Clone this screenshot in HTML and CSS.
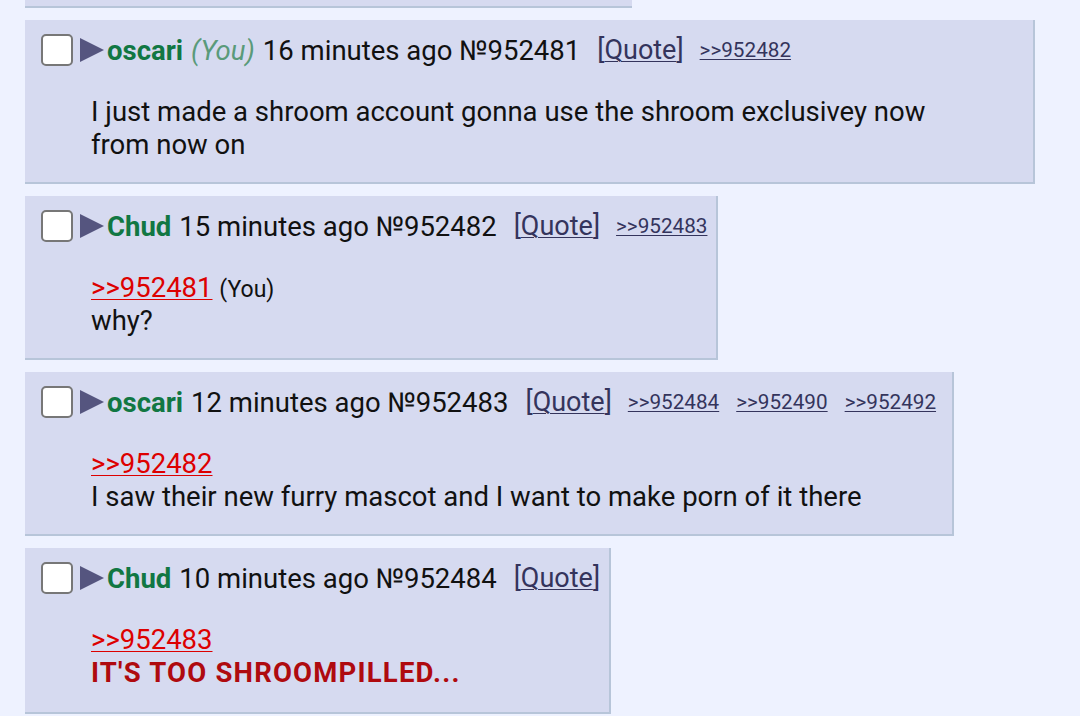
FILE: index.html
```html
<!DOCTYPE html>
<html>
<head>
<meta charset="utf-8">
<link rel="stylesheet" href="styles.css">
</head>
<body>
<div class="thread">
  <div class="post stub"></div>

  <div class="post wide">
    <div class="head">
      <span class="check"></span>
      <span class="tri"></span>
      <span class="name">oscari</span>
      <span class="you">(You)</span>
      <span class="time">16 minutes ago №952481</span>
      <span class="ql">[<u>Quote</u>]</span>
      <span class="backs"><a class="back">&gt;&gt;952482</a></span>
    </div>
    <div class="body">I just made a shroom account gonna use the shroom exclusivey now from now on</div>
  </div>

  <div class="post">
    <div class="head">
      <span class="check"></span>
      <span class="tri"></span>
      <span class="name">Chud</span>
      <span class="time">15 minutes ago №952482</span>
      <span class="ql">[<u>Quote</u>]</span>
      <span class="backs"><a class="back">&gt;&gt;952483</a></span>
    </div>
    <div class="body"><a class="rq">&gt;&gt;952481</a> <span class="me">(You)</span><br>why?</div>
  </div>

  <div class="post roomy">
    <div class="head">
      <span class="check"></span>
      <span class="tri"></span>
      <span class="name">oscari</span>
      <span class="time">12 minutes ago №952483</span>
      <span class="ql">[<u>Quote</u>]</span>
      <span class="backs"><a class="back">&gt;&gt;952484</a><a class="back">&gt;&gt;952490</a><a class="back">&gt;&gt;952492</a></span>
    </div>
    <div class="body"><a class="rq">&gt;&gt;952482</a><br>I saw their new furry mascot and I want to make porn of it there</div>
  </div>

  <div class="post last">
    <div class="head">
      <span class="check"></span>
      <span class="tri"></span>
      <span class="name">Chud</span>
      <span class="time">10 minutes ago №952484</span>
      <span class="ql">[<u>Quote</u>]</span>
    </div>
    <div class="body"><a class="rq">&gt;&gt;952483</a><br><span class="shout">IT'S TOO SHROOMPILLED...</span></div>
  </div>
</div>
</body>
</html>
```

FILE: styles.css
```css
html, body {
  margin: 0;
  padding: 0;
  background: #eef2ff;
  font-family: Roboto, "Noto Sans", sans-serif;
  color: #111;
  overflow: hidden;
}
.thread {
  display: flex;
  flex-direction: column;
  align-items: flex-start;
  gap: 12px;
  padding-left: 25px;
}
.post {
  background: #d6daf0;
  border-right: 2px solid #b7c5d9;
  border-bottom: 2px solid #b7c5d9;
  box-sizing: border-box;
  max-width: 1010px;
  padding: 12px 9px 21px 16px;
}
.post.roomy { padding-right: 16px; }
.post.last { padding-bottom: 23px; }
.post.stub {
  width: 607px;
  height: 8px;
  padding: 0;
  border-right: none;
}
.post.wide { width: 1010px; }
.head {
  display: flex;
  align-items: center;
  height: 36px;
  font-size: 27.5px;
  white-space: nowrap;
}
.check {
  width: 32px;
  height: 32px;
  box-sizing: border-box;
  border: 2px solid #777;
  border-radius: 5px;
  background: #fff;
  flex: none;
}
.tri {
  width: 0;
  height: 0;
  border-top: 12px solid transparent;
  border-bottom: 12px solid transparent;
  border-left: 24px solid #55557f;
  margin-left: 7px;
  margin-right: 3px;
}
.name {
  color: #117743;
  font-weight: bold;
  margin-right: 8px;
}
.you {
  color: #5a9a7a;
  font-style: italic;
  margin-right: 8px;
}
.time { margin-right: 17px; }
.ql { color: #34345c; margin-right: 16px; font-size: 27px; }
.ql:last-child { margin-right: 0; }
.ql u { text-decoration-thickness: 1px; text-underline-offset: 2px; }
.backs { display: flex; gap: 17px; }
.back {
  color: #34345c;
  font-size: 20.7px;
  text-decoration: underline;
  text-decoration-thickness: 1px;
  text-underline-offset: 2px;
}
.body {
  margin: 27px 60px 0 50px;
  font-size: 27.5px;
  line-height: 33px;
  color: #111;
}
.rq {
  color: #dd0000;
  text-decoration: underline;
  text-decoration-thickness: 1px;
  text-underline-offset: 2px;
}
.me { font-size: 23px; line-height: 1; }
.shout { color: #af0a0f; font-weight: bold; letter-spacing: 1.2px; }
```
